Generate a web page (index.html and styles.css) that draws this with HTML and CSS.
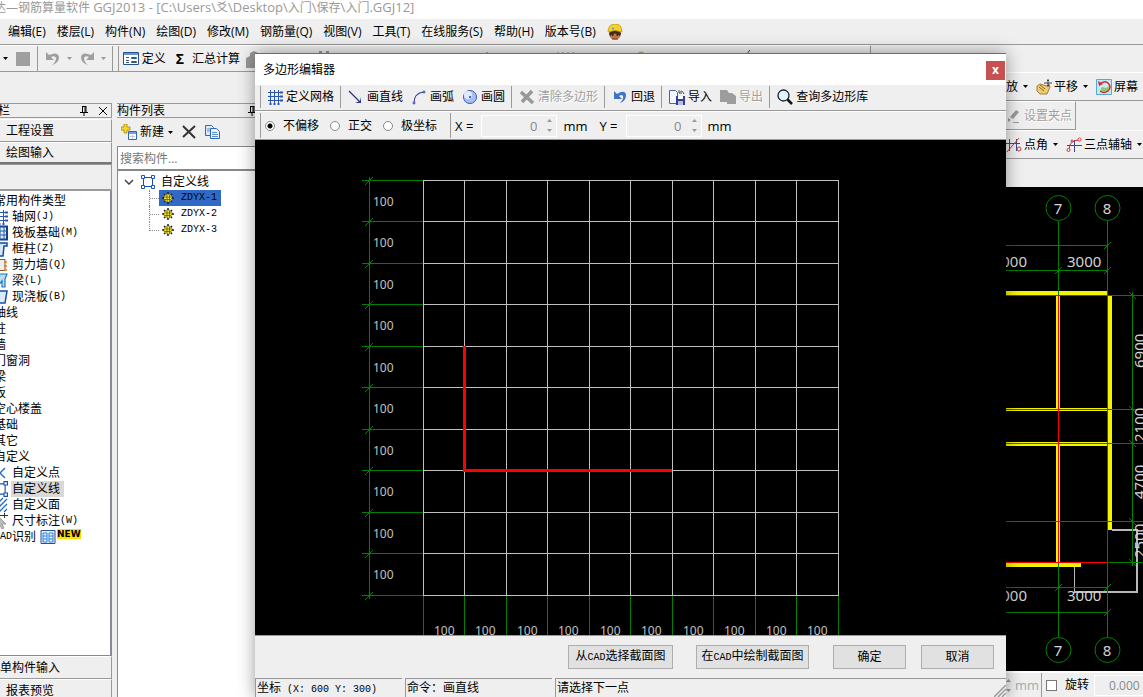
FILE: index.html
```
<!DOCTYPE html>
<html lang="zh-CN">
<head>
<meta charset="utf-8">
<title>钢筋算量软件 GGJ2013</title>
<link rel="stylesheet" href="styles.css">
</head>
<body>
<svg class="defs" aria-hidden="true">
  <defs>
    <symbol id="down" viewBox="0 0 5 3"><path d="M0 0h5L2.500 3z" fill="currentColor"/></symbol>
    <symbol id="up" viewBox="0 0 5 3"><path d="M0 3h5L2.500 0z" fill="currentColor"/></symbol>
    <symbol id="pin" viewBox="0 0 8 10"><path d="M2 0.500h4M2.500 0v6M5 0v6M6 0v6M0 6.500h8M4 6v4" stroke="#000" fill="none"/></symbol>
    <symbol id="grid" viewBox="0 0 16 16"><path d="M1 3.500h14M1 7.500h14M1 11.500h14M3.500 1v14M7.500 1v14M11.500 1v14" stroke="#2a57ad" fill="none"/><path d="M13 3.500h3M13 7.500h3M13 11.500h3M3.500 14v2M7.500 14v2M11.500 14v2" stroke="#2a57ad" stroke-width="2"/></symbol>
    <symbol id="gear" viewBox="0 0 12 12"><path d="M6 0v12M0 6h12M2 2l8 8M10 2l-8 8" stroke="#222" stroke-width="1.500"/><circle cx="6" cy="6" r="4" fill="#f4e632" stroke="#222" stroke-dasharray="1 1"/><path d="M3 5h6M3 7.500h6M5 3v6M7.500 3v6" stroke="#544d00" stroke-width=".7"/></symbol>
    <symbol id="box" viewBox="0 0 14 14"><path d="M2.500 2.500h9v9h-9z" fill="none" stroke="#1654bd"/><path d="M.5.5h3v3h-3zM10.500.5h3v3h-3zM.5 10.500h3v3h-3zM10.500 10.500h3v3h-3z" fill="#fff" stroke="#1654bd"/></symbol>
  </defs>
</svg>
<div class="app">
  <header class="titlebar">达—钢筋算量软件 <span class="latin">GGJ2013 - [C:\Users\</span>爻<span class="latin">\Desktop\</span>入门<span class="latin">\</span>保存<span class="latin">\</span>入门<span class="latin">.GGJ12]</span></header>
  <nav class="menubar">
    <button>编辑(E)</button><button>楼层(L)</button><button>构件(N)</button><button>绘图(D)</button><button>修改(M)</button><button>钢筋量(Q)</button><button>视图(V)</button><button>工具(T)</button><button>在线服务(S)</button><button>帮助(H)</button><button>版本号(B)</button>
    <svg class="i16" viewBox="0 0 16 16"><ellipse cx="8" cy="10" rx="6" ry="5.500" fill="#b57a50"/><path d="M2 9q6-5 12 0l-1 3q-5-5-10 0z" fill="#4a2a16"/><path d="M1 8Q1 0 8 0t7 8q-7-3-14 0z" fill="#f3d326" stroke="#b8900a" stroke-width=".7"/><circle cx="6" cy="4.500" r="1" fill="#4b93c9"/><path d="M5 11h1.500M9.500 11H11" stroke="#111" stroke-width="1.500"/><path d="M5 15h6" stroke="#a02020"/></svg>
  </nav>
  <div class="maintools">
    <svg class="arrow"><use href="#down"/></svg>
    <span class="blank"></span>
    <i class="sep"></i>
    <svg class="i16" viewBox="0 0 16 16"><path d="M1 1v8h8L6 6q4-2 5 1 0 4-4 7 7-2 7-8Q13 0 4 4z" fill="#9f9f9f"/></svg>
    <svg class="arrow dim"><use href="#down"/></svg>
    <svg class="i16" viewBox="0 0 16 16"><path d="M15 1v8H7l3-3Q6 4 5 7q0 4 4 7-7-2-7-8 1-6 10-2z" fill="#9f9f9f"/></svg>
    <svg class="arrow dim"><use href="#down"/></svg>
    <i class="sep groupend"></i>
    <i class="sep"></i>
    <button class="tool"><svg class="i16" viewBox="0 0 16 16"><path d="M.5 1.500h15v12H.5z" fill="#fff" stroke="#27508f"/><path d="M1 2h14v2H1z" fill="#6b92cf"/><path d="M3 6.500h3M3 9.500h3M3 11.500h3M8.500 6.500h5v1h-5zM8.500 10.500h5v1h-5z" stroke="#34558c" fill="none"/></svg>定义</button>
    <button class="tool sum"><b>Σ</b>汇总计算</button>
    <svg class="hidden-tools" viewBox="0 0 624 20"><path d="M0 14V9l4-2V4l4-2 6 3v14H0z" fill="#999"/><path d="M76 4v3M83 4v3M73 3h3M80 3h3" stroke="#345" /><path d="M238 5h15M241 3v5" stroke="#666"/><path d="M312 3v5M317 3v5M322 3v5M327 3v5M312 6h16" stroke="#888"/><path d="M390 5q6-5 9 0" fill="#bba77d"/><path d="M488 4h12v4h-12z" fill="#fff"/><path d="m500 6 4-5" stroke="#444"/></svg>
  </div>
  <div class="body">
    <aside class="dock modules">
      <div class="dockhead"><span>栏</span><svg class="pin"><use href="#pin"/></svg><svg class="closex" viewBox="0 0 8 8"><path d="m0 0 8 8M8 0 0 8" stroke="#000"/></svg></div>
      <button class="modbtn first">工程设置</button>
      <button class="modbtn active">绘图输入</button>
      <div class="modspace"></div>
      <ul class="tree types">
        <li>常用构件类型</li>
        <li class="kid"><svg class="i16"><use href="#grid"/></svg>轴网<span class="code">(J)</span></li>
        <li class="kid"><svg class="i16" viewBox="0 0 16 16"><path d="M1 1.500h14v13H1z" fill="#dcebfb" stroke="#123f85" stroke-width="2"/><path d="M1 6h14M1 10h14M8 1v14M12 1v14" stroke="#225da8"/></svg>筏板基础<span class="code">(M)</span></li>
        <li class="kid"><svg class="i16" viewBox="0 0 16 16"><path d="M2 2h13v3h-3l-1 10H7V5H2z" fill="#d5e7fa" stroke="#154b9b" stroke-width="1.500"/></svg>框柱<span class="code">(Z)</span></li>
        <li class="kid"><svg class="i16" viewBox="0 0 16 16"><path d="M2 2.500h11v11H2z" fill="#eee" stroke="#8a5237"/><path d="M12 5h3M12 9h3M12 13h3" stroke="#e07b18" stroke-width="1.500"/></svg>剪力墙<span class="code">(Q)</span></li>
        <li class="kid"><svg class="i16" viewBox="0 0 16 16"><path d="M3 5 7 1h8l-2 5v8h-3V8l-5 6z" fill="#b9dcf5" stroke="#1b76bd" stroke-width="1.200"/></svg>梁<span class="code">(L)</span></li>
        <li class="kid"><svg class="i16" viewBox="0 0 16 16"><path d="M2 2h13l-2 12H4z" fill="#dcebfb" stroke="#164da1" stroke-width="1.500"/></svg>现浇板<span class="code">(B)</span></li>
        <li>轴线</li><li>柱</li><li>墙</li><li>门窗洞</li><li>梁</li><li>板</li><li>空心楼盖</li><li>基础</li><li>其它</li><li>自定义</li>
        <li class="kid"><svg class="i16" viewBox="0 0 16 16"><path d="m13 3-5 5 5 5M3 3l5 5-5 5" fill="none" stroke="#1d68bd" stroke-width="1.300"/></svg>自定义点</li>
        <li class="kid"><svg class="i16"><use href="#box"/></svg><span class="current">自定义线</span></li>
        <li class="kid"><svg class="i16" viewBox="0 0 16 16"><path d="m7 5 4-4M7 10l8-8M7 15l8-8M12 15l3-3" stroke="#2465c8" stroke-width="1.300"/></svg>自定义面</li>
        <li class="kid"><svg class="i16" viewBox="0 0 16 16"><path d="M8 2.500h8M12.500 0v5" stroke="#333"/><path d="m6 3 8 8-4 0 2 4-2 1-2-4-3 2z" fill="#bbb" stroke="#888" stroke-width=".7"/></svg>尺寸标注<span class="code">(W)</span></li>
        <li class="cad"><span class="code">CAD</span>识别<svg class="i16" viewBox="0 0 16 16"><path d="M1 1.500h14v13H1z" fill="#e5f0fc" stroke="#27508f"/><path d="M3 4h4v9H3zM9 4h4v9H9zM3 7h4M9 7h4M3 10h4M9 10h4" fill="none" stroke="#2884e0"/></svg><em class="new">NEW</em></li>
      </ul>
      <button class="modbtn flush">单构件输入</button>
      <button class="modbtn">报表预览</button>
    </aside>
    <aside class="dock components">
      <div class="dockhead"><span>构件列表</span><svg class="pin"><use href="#pin"/></svg></div>
      <div class="listtools">
        <button class="tool"><svg class="i16" viewBox="0 0 16 16"><path d="M7.500 7.500h8v8h-8z" fill="#fff" stroke="#3564a9"/><path d="M8 8h7v2H8z" fill="#72a0e2"/><path d="M9 12.500h5M11.500 11v4" stroke="#b8cbe8"/><path d="M3 0h3v3h3v3H6v3H3V6H0V3h3z" fill="#f6d62d" stroke="#a88a0c" stroke-width=".8"/></svg>新建<svg class="arrow"><use href="#down"/></svg></button>
        <svg class="i16" viewBox="0 0 16 16"><path d="m2 2 12 12M14 2 2 13" stroke="#333" stroke-width="2"/></svg>
        <svg class="i16" viewBox="0 0 16 16"><path d="M1.500 1.500h6l2 2v8h-8z" fill="#dceafb" stroke="#2e68b5"/><path d="M6.500 4.500h6l3 3v7h-9z" fill="#e9f2fd" stroke="#2e68b5"/><path d="M3 5h3M3 7h3M8 8.500h5M8 10.500h6M8 12.500h6" stroke="#5c8ed0"/></svg>
      </div>
      <input class="search" type="text" placeholder="搜索构件..." aria-label="搜索构件">
      <ul class="tree items">
        <li class="root"><svg class="chev" viewBox="0 0 10 6"><path d="m1 1 4 4 4-4" fill="none" stroke="#444" stroke-width="1.500"/></svg><svg class="i14"><use href="#box"/></svg>自定义线</li>
        <li class="leaf"><span class="pick"><svg class="i12"><use href="#gear"/></svg><span class="code">ZDYX-1</span></span></li>
        <li class="leaf"><span><svg class="i12"><use href="#gear"/></svg><span class="code">ZDYX-2</span></span></li>
        <li class="leaf"><span><svg class="i12"><use href="#gear"/></svg><span class="code">ZDYX-3</span></span></li>
      </ul>
    </aside>
    <main class="work">
      <div class="viewtools">
        <div class="vrow"><button class="tool">放<svg class="arrow"><use href="#down"/></svg></button>
          <button class="tool"><svg class="i16" viewBox="0 0 16 16"><path d="M1 7 4 5l7 2 2-2 1 3-3 7H4L1 12z" fill="#edcb70" stroke="#8e6826" stroke-width=".8"/><path d="m4 6 5 4M3 8l5 4" stroke="#8e6826"/><path d="M12 0v8M8 4h8M11 1.500h2M11 6.500h2" stroke="#3d4048"/></svg>平移<svg class="arrow"><use href="#down"/></svg></button>
          <button class="tool"><svg class="i16" viewBox="0 0 16 16"><path d="M.5.5h15v15H.5z" fill="#c5e8f6" stroke="#57a9d4"/><path d="m4 12 2-4 4 1 3-2-1 6z" fill="#8fc76d"/><path d="M4 5q4-4 8-1 4 4 0 8-4 3-8 0" fill="none" stroke="#d22c2c" stroke-width="1.500"/><path d="m2 2 1 5 4-2z" fill="#d22c2c"/></svg>屏幕</button></div>
        <div class="vrow boxed"><button class="tool" disabled><svg class="i16" viewBox="0 0 16 16"><path d="m4 9 6-7 3 2-6 7zM2 14v-4l3 2z" fill="#999"/><path d="M7 14.500h6" stroke="#999"/></svg>设置夹点</button></div>
        <div class="vrow"><button class="tool"><svg class="i16" viewBox="0 0 16 16"><path d="M3.500 2v12M10.500 2v12M0 6.500h14" stroke="#3b4796"/><path d="M1 15 13 1" stroke="#c33"/><circle cx="13" cy="12" r="2" fill="none" stroke="#c33"/></svg>点角<svg class="arrow"><use href="#down"/></svg></button>
          <button class="tool"><svg class="i16" viewBox="0 0 16 16"><path d="M8.500 3v12M1 8.500h15" stroke="#3b4796"/><path d="M3 13Q3 3 13 3" fill="none" stroke="#c33"/><circle cx="2.500" cy="13" r="1.500" fill="#fff" stroke="#c33"/><circle cx="6" cy="4" r="1" fill="#fff" stroke="#c33"/><circle cx="13.500" cy="2.500" r="1.500" fill="#fff" stroke="#c33"/></svg>三点辅轴<svg class="arrow"><use href="#down"/></svg></button></div>
      </div>
      <div class="plan">
        <svg viewBox="1006 187 137 484" preserveAspectRatio="xMaxYMin slice">
          <g fill="#f4f400"><path d="M1006 291h101v4h-101zM1056 296h4v113h-4zM1108 296h4v234h-4zM1006 408h101v3h-101zM1006 442h101v4h-101zM1056 446h4v116h-4zM1006 563h75v4h-75z"/></g>
          <g stroke="#b8b8b8" fill="none"><path d="M1112 530h25v62h-63" stroke-width="2"/><path d="M1074.500 567v25"/></g>
          <g stroke="#f00" fill="none"><path d="M1006 295.500h101.500V562.500H1006M1058.500 296v266M1006 409.500h101M1006 443.500h101M1006 521.500h101"/></g>
          <g stroke="#008000" fill="none">
            <path d="M1058.500 221v74M1107.500 221v74M1006 245.500h102M1006 270.500h102M1107 295.500h36M1132.500 292v274M1108 409.500h35M1108 443.500h35M1108 521.500h35M1108 562.500h35M1058.500 563v74M1107.500 563v74M1006 587.500h102M1006 612.500h102"/>
            <path d="m1104 249 7-7M1104 274l7-7M1055 274l7-7M1129 292l7 7M1129 406l7 7M1129 440l7 7M1129 518l7 7M1129 559l7 7M1055 591l7-7M1104 591l7-7M1104 616l7-7"/>
            <circle cx="1058.500" cy="208" r="12.500"/><circle cx="1107.500" cy="208" r="12.500"/><circle cx="1058.500" cy="650" r="12.500"/><circle cx="1107.500" cy="650" r="12.500"/>
          </g>
          <g class="dims">
            <text x="1058" y="214" text-anchor="middle">7</text><text x="1107" y="214" text-anchor="middle">8</text>
            <text x="1058" y="656" text-anchor="middle">7</text><text x="1107" y="656" text-anchor="middle">8</text>
            <text x="1027" y="267" text-anchor="end">000</text><text x="1067" y="267">3000</text>
            <text x="1027" y="601" text-anchor="end">000</text><text x="1067" y="601">3000</text>
            <text transform="translate(1145 368) rotate(-90)">6900</text><text transform="translate(1145 442) rotate(-90)">2100</text><text transform="translate(1145 499) rotate(-90)">4700</text><text transform="translate(1145 558) rotate(-90)">2500</text>
          </g>
        </svg>
      </div>
      <div class="workstatus">
        <span class="arrows dim"><svg class="arrow"><use href="#up"/></svg><svg class="arrow"><use href="#down"/></svg></span>
        <span class="unit off">mm</span>
        <label class="rotate"><input type="checkbox">旋转</label>
        <input class="angle" type="text" value="0.000" aria-label="旋转角度" disabled>
      </div>
    </main>
  </div>
</div>

<section class="dialog" role="dialog" aria-labelledby="dlg-title">
  <header class="dlghead"><h1 id="dlg-title">多边形编辑器</h1><button class="close" aria-label="关闭">x</button></header>
  <div class="dlgtools">
    <i class="sep"></i>
    <button class="tool"><svg class="i16"><use href="#grid"/></svg>定义网格</button><i class="sep"></i>
    <button class="tool"><svg class="i16" viewBox="0 0 16 16"><path d="m1 2 11 11" stroke="#24387a" stroke-width="1.300"/><path d="M13 8v6H7l5-2z" fill="#24387a"/></svg>画直线</button>
    <button class="tool"><svg class="i16" viewBox="0 0 16 16"><path d="M3 14Q3 4 13 3" fill="none" stroke="#3040a0" stroke-width="1.200"/><circle cx="3" cy="14" r="1" fill="#fff" stroke="#3040a0"/><circle cx="13" cy="3" r="1" fill="#fff" stroke="#3040a0"/></svg>画弧</button>
    <button class="tool"><svg class="i16" viewBox="0 0 16 16"><circle cx="8" cy="8" r="6.500" fill="#a5c0f8" stroke="#3957b5"/><circle cx="6" cy="6" r="4" fill="#e0eaff"/><circle cx="8" cy="8" r="1" fill="#24387a"/></svg>画圆</button><i class="sep"></i>
    <button class="tool" disabled><svg class="i16" viewBox="0 0 16 16"><path d="m2 3 12 11M13 2 3 13" stroke="#989898" stroke-width="3.500"/></svg>清除多边形</button><i class="sep"></i>
    <button class="tool"><svg class="i16" viewBox="0 0 16 16"><path d="M2 2v8h8L7 7q3-2 4 0 1 3-3 7 6-2 6-8-1-6-9-1z" fill="#3d72c9"/></svg>回退</button><i class="sep"></i>
    <button class="tool"><svg class="i16" viewBox="0 0 16 16"><path d="M.5 1.500h6l2 2v11h-8z" fill="#f2f6ff" stroke="#4764a5"/><path d="M7 7h9v9H7z" fill="#373f92"/><path d="M9 7h5v3H9z" fill="#fff"/><path d="M9 12h5v4H9z" fill="#b7bee6"/><path d="M10 4q3-4 5 1M10 1v3h3" fill="none" stroke="#555"/></svg>导入</button>
    <button class="tool" disabled><svg class="i16" viewBox="0 0 16 16"><path d="M0 1h7l2 3h3l4 3v8H7v-2H0z" fill="#9d9d9d"/></svg>导出</button><i class="sep"></i>
    <button class="tool"><svg class="i16" viewBox="0 0 16 16"><circle cx="6.500" cy="6.500" r="5.500" fill="#dff4fc" stroke="#222" stroke-width="1.300"/><path d="m10.500 10.500 4.500 4.500" stroke="#111" stroke-width="2.500"/></svg>查询多边形库</button>
  </div>
  <div class="dlgopts">
    <i class="sep"></i>
    <label><input type="radio" name="offset" checked>不偏移</label>
    <label><input type="radio" name="offset">正交</label>
    <label><input type="radio" name="offset">极坐标</label>
    <i class="sep"></i>
    <label class="axis" for="ox">X =</label>
    <span class="spin"><input id="ox" type="text" value="0" disabled><span class="arrows dim"><svg class="arrow"><use href="#up"/></svg><svg class="arrow"><use href="#down"/></svg></span></span>
    <span class="unit">mm</span>
    <label class="axis" for="oy">Y =</label>
    <span class="spin"><input id="oy" type="text" value="0" disabled><span class="arrows dim"><svg class="arrow"><use href="#up"/></svg><svg class="arrow"><use href="#down"/></svg></span></span>
    <span class="unit">mm</span>
  </div>
  <div class="sheet">
    <svg viewBox="255 140 751 495">
      <path stroke="#008000" fill="none" d="M369.500 177v422M362 180.500h61M362 221.500h61M362 263.500h61M362 304.500h61M362 346.500h61M362 387.500h61M362 429.500h61M362 470.500h61M362 512.500h61M362 553.500h61M362 595.500h61M423.500 596v39M464.500 596v39M506.500 596v39M547.500 596v39M589.500 596v39M630.500 596v39M672.500 596v39M713.500 596v39M755.500 596v39M796.500 596v39M838.500 596v39"/>
      <path stroke="#008000" fill="none" d="m365 185 8-8M365 226l8-8M365 268l8-8M365 309l8-8M365 351l8-8M365 392l8-8M365 434l8-8M365 475l8-8M365 517l8-8M365 558l8-8M365 600l8-8"/>
      <path stroke="#c0c0c0" fill="none" d="M423 180.500h416M423 221.500h416M423 263.500h416M423 304.500h416M423 346.500h416M423 387.500h416M423 429.500h416M423 470.500h416M423 512.500h416M423 553.500h416M423 595.500h416M423.500 180v416M464.500 180v416M506.500 180v416M547.500 180v416M589.500 180v416M630.500 180v416M672.500 180v416M713.500 180v416M755.500 180v416M796.500 180v416M838.500 180v416"/>
      <path stroke="#f00" stroke-width="3" fill="none" d="M464.500 346v124.500H672"/>
      <g class="marks">
        <text x="373" y="206">100</text><text x="373" y="247">100</text><text x="373" y="289">100</text><text x="373" y="330">100</text><text x="373" y="372">100</text><text x="373" y="413">100</text><text x="373" y="455">100</text><text x="373" y="496">100</text><text x="373" y="538">100</text><text x="373" y="579">100</text>
        <text x="434" y="635">100</text><text x="475" y="635">100</text><text x="517" y="635">100</text><text x="558" y="635">100</text><text x="600" y="635">100</text><text x="641" y="635">100</text><text x="683" y="635">100</text><text x="724" y="635">100</text><text x="766" y="635">100</text><text x="807" y="635">100</text>
      </g>
    </svg>
  </div>
  <div class="actions">
    <button class="wide">从<span class="code">CAD</span>选择截面图</button>
    <button class="wide second">在<span class="code">CAD</span>中绘制截面图</button>
    <button class="std">确定</button>
    <button class="std">取消</button>
  </div>
  <footer class="status">
    <span class="cell">坐标<span class="code"> (X: 600 Y: 300)</span></span>
    <span class="cell">命令：画直线</span>
    <span class="cell last">请选择下一点</span>
    <svg class="grip" viewBox="0 0 12 12"><path d="M0 12 12 0M4 12l8-8M8 12l4-4" stroke="#999" stroke-width="1.500"/></svg>
  </footer>
</section>
</body>
</html>
```
FILE: styles.css
```
* { box-sizing: border-box; }
body {
  margin: 0;
  height: 100vh;
  overflow: hidden;
  position: relative;
  background: #efefef;
  color: #000;
  font: 12px/16px "Open Sans", "Noto Sans CJK SC", sans-serif;
  white-space: nowrap;
}
button, input { font: inherit; color: inherit; }
button { border: 0; padding: 0; margin: 0; background: none; }
svg { display: block; flex: none; }
ul { list-style: none; margin: 0; padding: 0; }
.defs { position: absolute; width: 0; height: 0; }
.i16 { width: 16px; height: 16px; }
.i14 { width: 14px; height: 14px; }
.i12 { width: 12px; height: 12px; }
.arrow { width: 5px; height: 3px; }
.dim { color: #999; }
.code { font-family: "Liberation Mono", monospace; font-size: 10px; white-space: pre; }
.sep { flex: none; width: 1px; align-self: stretch; background: #999; }

.app { display: flex; flex-direction: column; height: 100%; }
.titlebar { height: 19px; line-height: 14px; padding-bottom: 5px; background: #fff; color: #999; text-indent: -6px; }
.latin { font-size: 13px; }
.menubar { display: flex; align-items: center; gap: 11px; height: 26px; padding-left: 8px; border-bottom: 1px solid #999; }

.maintools { display: flex; align-items: center; height: 27px; padding-left: 3px; border-top: 1px solid #fff; border-bottom: 1px solid #999; width: 871px; border-right: 1px solid #999; overflow: hidden; }
.blank { width: 14px; height: 14px; background: #9f9f9f; margin: 0 7px 0 8px; }
.maintools > .i16 { margin: 0 6px 0 7px; }
.maintools > .groupend { margin: 0 5px 0 6px; }
.maintools > .groupend + .sep { margin: 0; }
.maintools .sum { gap: 8px; margin-left: 2px; }
.sum b { font-size: 14px; }
.hidden-tools { width: 624px; height: 20px; margin-left: 2px; }

.tool { display: flex; align-items: center; gap: 3px; padding: 0 4px; }
.tool:disabled { color: #a0a0a0; text-shadow: 1px 1px #fff; }
.tool .arrow { margin-left: 1px; }

.body { display: flex; flex: 1; min-height: 0; }
.dock { display: flex; flex-direction: column; flex: none; padding-top: 31px; }
.modules { width: 112px; margin: 0 5px -5px 0; }
.components { width: 150px; }
.dockhead { display: flex; align-items: center; gap: 11px; height: 15px; border: 1px solid #999; border-left: 0; }
.dockhead span { flex: 1; }
.modules .dockhead span { text-indent: -2px; }
.modules .dockhead { padding-right: 4px; }
.components .dockhead { padding-right: 10px; }
.pin { width: 8px; height: 10px; }
.closex { width: 8px; height: 8px; }
.modbtn { flex: none; height: 23px; padding-left: 6px; text-align: left; border: 1px solid #999; border-left: 0; border-top-color: #fff; }
.modbtn.first { margin-top: 1px; }
.modbtn.flush { padding-left: 0; }
.modbtn.active { height: 22px; border-bottom: 2px solid #777; }
.modspace { height: 27px; border: 1px solid #999; border-left: 0; border-bottom-width: 2px; }
.tree li { display: flex; align-items: center; height: 16px; }
.types { flex: 1; min-height: 0; overflow: hidden; background: #fff; border-right: 2px solid #858a93; border-bottom: 1px solid #858a93; padding-top: 2px; }
.types li { margin-left: -6px; }
.types .kid { margin-left: -8px; gap: 4px; }
.types .kid .code { margin-left: -4px; }
.types .current { background: #d9d9d9; padding: 0 4px 0 1px; margin-left: -1px; }
.types .cad .i16 { margin-left: 4px; }
.new { background: #ffdf00; font: bold 9px/10px "DejaVu Sans", sans-serif; margin: 0 0 6px 1px; }

.listtools { display: flex; align-items: center; gap: 7px; height: 28px; }
.listtools .tool { margin-right: -3px; }
.search { height: 25px; margin: 0; padding: 0 2px; border: 2px solid #888; border-width: 1px 0 2px 1px; background: #fff; border-radius: 0; width: 100%; }
.search::placeholder { color: #777; opacity: 1; }
.items { flex: 1; background: #fff; border-left: 1px solid #858a93; padding-top: 3px; }
.items .root { padding-left: 6px; gap: 6px; }
.items .root .i14 { margin-left: 1px; }
.chev { width: 10px; height: 6px; }
.items .leaf { padding-left: 31px; }
.leaf::before { content: ""; width: 9px; height: 16px; border-left: 1px dotted #888; background: repeating-linear-gradient(90deg, #888 0 1px, transparent 1px 2px) 0 8px / 9px 1px no-repeat; }
.leaf:last-child::before { height: 9px; align-self: flex-start; }
.leaf > span { display: flex; align-items: center; gap: 7px; height: 16px; padding: 0 4px 0 3px; }
.leaf > .pick { background: #316ac5; }

.work { flex: 1; min-width: 0; display: flex; flex-direction: column; }
.viewtools { width: 137px; margin-left: auto; height: 115px; overflow: hidden; }
.vrow { display: flex; align-items: center; height: 29px; border-top: 1px solid #fff; border-bottom: 1px solid #999; }
.vrow .tool { padding: 0 3px; gap: 2px; }
.vrow .tool:first-child { padding-left: 0; }
.vrow .arrow { margin: 0 2px 0 3px; }
.boxed { width: 70px; border-right: 1px solid #999; }
.plan { flex: 1; min-height: 0; background: #000; display: flex; justify-content: flex-end; }
.plan svg { width: 137px; height: 100%; }
.dims { fill: #d4d4d4; font-family: "Noto Sans", sans-serif; font-size: 15px; }
.workstatus { display: flex; align-items: center; align-self: flex-end; width: 137px; height: 26px; border-top: 2px solid #fff; overflow: hidden; }
.arrows { display: flex; flex-direction: column; gap: 7px; }
.unit { font-size: 13px; }
.off { color: #aaa; margin: 0 2px 0 4px; }
.rotate { display: flex; align-items: center; height: 100%; border-left: 1px solid #999; padding: 0 5px 0 4px; gap: 8px; }
.rotate input { appearance: none; width: 11px; height: 11px; margin: 0; border: 1px solid #777; background: #fff; }
.angle { flex: 1; min-width: 0; height: 21px; padding: 0 0 0 14px; border: 1px solid #fff; border-right: 0; background: #efefef; color: #888; font-size: 12px; }

.dialog { position: absolute; left: 255px; right: 137px; top: 53px; bottom: 0; display: flex; flex-direction: column; background: #efefef; border-top: 1px solid #1883d7; box-shadow: 0 0 16px rgba(0, 0, 0, .4); }
.dlghead { display: flex; align-items: center; justify-content: space-between; height: 31px; padding-left: 8px; background: #fff; }
.dlghead h1 { margin: 0; font-size: 12px; font-weight: normal; }
.close { width: 19px; height: 19px; margin: 1px 1px 0 0; background: #c75050; color: #fff; font-weight: bold; line-height: 18px; }
.dlgtools { display: flex; align-items: center; height: 26px; padding: 1px 0 2px 5px; border-bottom: 1px solid #999; }
.dlgtools .sep { margin: 0 3px 0 2px; }
.dlgtools > .sep:first-child { margin: 0 2px 0 0; }
.dlgopts { display: flex; align-items: center; height: 29px; padding: 1px 0 1px 5px; border-top: 1px solid #fff; border-bottom: 1px solid #999; }
.dlgopts label { display: flex; align-items: center; gap: 8px; margin-right: 11px; }
.dlgopts > .sep { margin: 0 4px 0 2px; }
.dlgopts > .sep:first-child { margin-left: 0; }
.dlgopts input[type="radio"] { appearance: none; width: 10px; height: 10px; margin: 0; border: 1px solid #888; border-radius: 50%; background: #fff; }
.dlgopts input[type="radio"]:checked { background: radial-gradient(#000 0 2px, #fff 3px); }
.dlgopts .axis { font-size: 13px; margin: 0 8px 0 0; }
.spin { display: flex; align-items: center; width: 76px; height: 22px; border: 1px solid #fff; padding-right: 4px; margin-right: 6px; }
.spin input { flex: 1; min-width: 0; padding: 0 10px 0 0; border: 0; background: none; text-align: right; color: #888; font-size: 13px; }
.dlgopts .unit { margin-right: 12px; }
.sheet { flex: 1; min-height: 0; background: #000; }
.sheet svg { width: 100%; height: 100%; }
.marks { fill: #c0c0c0; font-family: "Noto Sans", sans-serif; font-size: 12px; }
.actions { display: flex; align-items: center; justify-content: flex-end; gap: 15px; height: 43px; padding-right: 12px; border-top: 1px solid #999; }
.actions button { height: 24px; background: #e1e1e1; border: 1px solid #adadad; }
.actions .wide { width: 105px; margin-right: 8px; }
.actions .second { width: 113px; margin-right: 9px; }
.std { width: 73px; }
.status { display: flex; gap: 3px; height: 19px; position: relative; }
.cell { width: 147px; padding: 1px 0 0 1px; border: 1px solid #999; border-width: 1px 0 0 1px; }
.cell.last { flex: 1; }
.grip { position: absolute; right: 0; bottom: 0; width: 12px; height: 12px; }
```
